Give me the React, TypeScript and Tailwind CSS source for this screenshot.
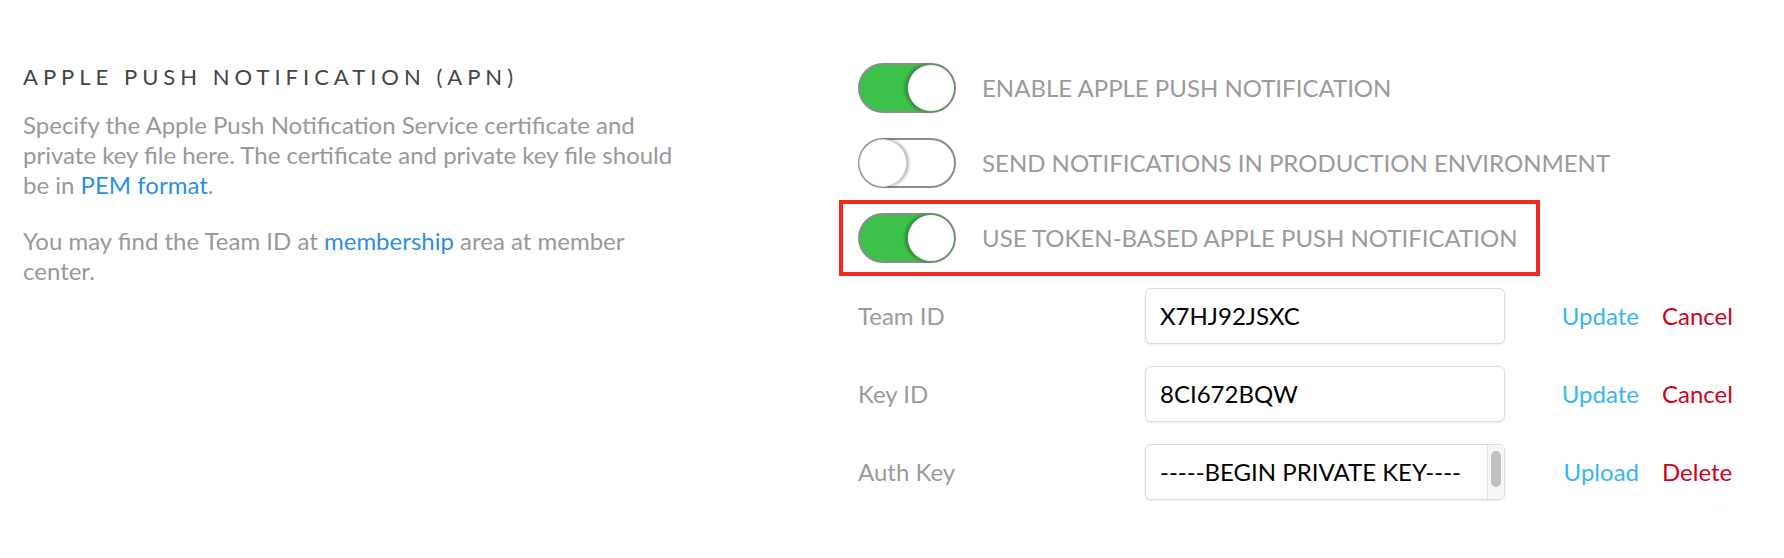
import React from 'react';

const font = { fontFamily: 'Lato, "Open Sans", Arial, sans-serif' };

function Toggle({ on }: { on: boolean }) {
  if (on) {
    return (
      <div className="relative h-[50px] w-[98px] shrink-0 rounded-full border-2 border-[#8c8c8c] bg-[#3cc14a]">
        <div className="absolute -top-px -right-px h-[48px] w-[48px] rounded-full border border-[#4a9c4f] bg-white shadow-[-2px_0_3px_rgba(0,0,0,0.3)]" />
      </div>
    );
  }
  return (
    <div className="relative h-[50px] w-[98px] shrink-0 rounded-full border-2 border-[#8c8c8c] bg-white">
      <div className="absolute -top-px -left-px h-[48px] w-[48px] rounded-full border border-[#d8d8d8] bg-white shadow-[2px_0_3px_rgba(0,0,0,0.3)]" />
    </div>
  );
}

function ToggleRow({ on, label, boxed }: { on: boolean; label: string; boxed?: boolean }) {
  return (
    <div className="relative flex h-[50px] items-center">
      <Toggle on={on} />
      <span className="ml-[26px] text-[24px] text-[#9b9b9b]">{label}</span>
      {boxed && (
        <div className="pointer-events-none absolute -top-[13px] -left-[19px] h-[76px] w-[701px] border-[4px] border-[#f5281d]" />
      )}
    </div>
  );
}

function FieldRow({
  label,
  value,
  primary,
  danger,
  area,
}: {
  label: string;
  value: string;
  primary: string;
  danger: string;
  area?: boolean;
}) {
  return (
    <div className="flex h-[56px] items-center">
      <div className="w-[287px] shrink-0 text-[24px] text-[#9b9b9b]">{label}</div>
      {area ? (
        <div className="flex h-[56px] w-[360px] shrink-0 overflow-hidden rounded-md border border-[#dcdcdc] bg-white shadow-[0_1px_2px_rgba(0,0,0,0.08)]">
          <div className="flex-1 overflow-hidden whitespace-nowrap pl-[14px] pt-[9px] text-[24px] leading-[36px] text-black">
            {value}
            <br />-----END PRIVATE KEY-----
          </div>
          <div className="w-[17px] shrink-0 border-l border-[#e6e6e6] bg-[#f7f7f7] px-[3px] pt-[6px]">
            <div className="h-[36px] rounded-full bg-[#c1c1c1]" />
          </div>
        </div>
      ) : (
        <div className="flex h-[56px] w-[360px] shrink-0 items-center rounded-md border border-[#dcdcdc] bg-white pl-[14px] text-[24px] text-black shadow-[0_1px_2px_rgba(0,0,0,0.08)]">
          {value}
        </div>
      )}
      <div className="ml-[50px] flex w-[84px] justify-end text-[24px] text-[#38b6f2]">{primary}</div>
      <div className="ml-[23px] text-[24px] text-[#d0021b]">{danger}</div>
    </div>
  );
}

export default function App() {
  return (
    <div className="min-h-[558px] w-[1784px] bg-white" style={font}>
      <div className="flex px-[23px] pt-[63px]">
        {/* description */}
        <div className="w-[835px] shrink-0">
          <h2 className="text-[22px] leading-[28px] tracking-[5px] text-[#454545]">
            APPLE PUSH NOTIFICATION (APN)
          </h2>
          <p className="mt-[19px] w-[680px] text-[24px] leading-[30px] text-[#999999]">
            Specify the Apple Push Notification Service certificate and private key file here. The
            certificate and private key file should be in{' '}
            <span className="text-[#2e8fe1]">PEM format</span>.
          </p>
          <p className="mt-[26px] w-[640px] text-[24px] leading-[30px] text-[#999999]">
            You may find the Team ID at <span className="text-[#2e8fe1]">membership</span> area at
            member center.
          </p>
        </div>

        {/* settings */}
        <div className="flex flex-1 flex-col">
          <div className="flex flex-col gap-[25px]">
            <ToggleRow on label="ENABLE APPLE PUSH NOTIFICATION" />
            <ToggleRow on={false} label="SEND NOTIFICATIONS IN PRODUCTION ENVIRONMENT" />
            <ToggleRow on boxed label="USE TOKEN-BASED APPLE PUSH NOTIFICATION" />
          </div>
          <div className="mt-[25px] flex flex-col gap-[22px]">
            <FieldRow label="Team ID" value="X7HJ92JSXC" primary="Update" danger="Cancel" />
            <FieldRow label="Key ID" value="8CI672BQW" primary="Update" danger="Cancel" />
            <FieldRow
              area
              label="Auth Key"
              value="-----BEGIN PRIVATE KEY----"
              primary="Upload"
              danger="Delete"
            />
          </div>
        </div>
      </div>
    </div>
  );
}
